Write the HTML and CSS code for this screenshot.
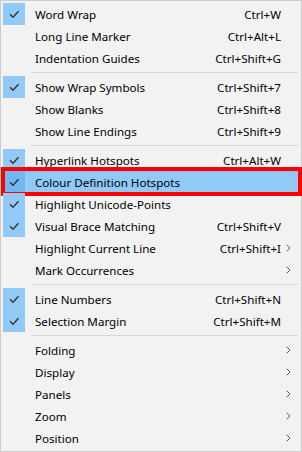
FILE: index.html
```html
<!DOCTYPE html>
<html>
<head>
<meta charset="utf-8">
<link rel="stylesheet" href="styles.css">
</head>
<body>
<div class="menu">
  <div class="item checked"><span class="check"><svg viewBox="0 0 22 22" width="22" height="22"><path d="M7 11.2 L10 14.2 L15.5 8.3" fill="none" stroke="#333" stroke-width="1.4"/></svg></span><span class="label">Word Wrap</span><span class="key">Ctrl+W</span><span class="arrow"></span></div>
  <div class="item"><span class="check"></span><span class="label">Long Line Marker</span><span class="key">Ctrl+Alt+L</span><span class="arrow"></span></div>
  <div class="item"><span class="check"></span><span class="label">Indentation Guides</span><span class="key">Ctrl+Shift+G</span><span class="arrow"></span></div>
  <div class="sep"></div>
  <div class="item checked"><span class="check"><svg viewBox="0 0 22 22" width="22" height="22"><path d="M7 11.2 L10 14.2 L15.5 8.3" fill="none" stroke="#333" stroke-width="1.4"/></svg></span><span class="label">Show Wrap Symbols</span><span class="key">Ctrl+Shift+7</span><span class="arrow"></span></div>
  <div class="item"><span class="check"></span><span class="label">Show Blanks</span><span class="key">Ctrl+Shift+8</span><span class="arrow"></span></div>
  <div class="item"><span class="check"></span><span class="label">Show Line Endings</span><span class="key">Ctrl+Shift+9</span><span class="arrow"></span></div>
  <div class="sep"></div>
  <div class="item checked"><span class="check"><svg viewBox="0 0 22 22" width="22" height="22"><path d="M7 11.2 L10 14.2 L15.5 8.3" fill="none" stroke="#333" stroke-width="1.4"/></svg></span><span class="label">Hyperlink Hotspots</span><span class="key">Ctrl+Alt+W</span><span class="arrow"></span></div>
  <div class="item checked active"><span class="check"><svg viewBox="0 0 22 22" width="22" height="22"><path d="M7 11.2 L10 14.2 L15.5 8.3" fill="none" stroke="#333" stroke-width="1.4"/></svg></span><span class="label">Colour Definition Hotspots</span><span class="key"></span><span class="arrow"></span><span class="redbox"></span></div>
  <div class="item checked"><span class="check"><svg viewBox="0 0 22 22" width="22" height="22"><path d="M7 11.2 L10 14.2 L15.5 8.3" fill="none" stroke="#333" stroke-width="1.4"/></svg></span><span class="label">Highlight Unicode-Points</span><span class="key"></span><span class="arrow"></span></div>
  <div class="item checked"><span class="check"><svg viewBox="0 0 22 22" width="22" height="22"><path d="M7 11.2 L10 14.2 L15.5 8.3" fill="none" stroke="#333" stroke-width="1.4"/></svg></span><span class="label">Visual Brace Matching</span><span class="key">Ctrl+Shift+V</span><span class="arrow"></span></div>
  <div class="item"><span class="check"></span><span class="label">Highlight Current Line</span><span class="key">Ctrl+Shift+I</span><span class="arrow"><svg viewBox="0 0 5 8" width="5" height="8"><path d="M0.8 0.8 L4 4 L0.8 7.2" fill="none" stroke="#555" stroke-width="1"/></svg></span></div>
  <div class="item"><span class="check"></span><span class="label">Mark Occurrences</span><span class="key"></span><span class="arrow"><svg viewBox="0 0 5 8" width="5" height="8"><path d="M0.8 0.8 L4 4 L0.8 7.2" fill="none" stroke="#555" stroke-width="1"/></svg></span></div>
  <div class="sep"></div>
  <div class="item checked"><span class="check"><svg viewBox="0 0 22 22" width="22" height="22"><path d="M7 11.2 L10 14.2 L15.5 8.3" fill="none" stroke="#333" stroke-width="1.4"/></svg></span><span class="label">Line Numbers</span><span class="key">Ctrl+Shift+N</span><span class="arrow"></span></div>
  <div class="item checked"><span class="check"><svg viewBox="0 0 22 22" width="22" height="22"><path d="M7 11.2 L10 14.2 L15.5 8.3" fill="none" stroke="#333" stroke-width="1.4"/></svg></span><span class="label">Selection Margin</span><span class="key">Ctrl+Shift+M</span><span class="arrow"></span></div>
  <div class="sep"></div>
  <div class="item"><span class="check"></span><span class="label">Folding</span><span class="key"></span><span class="arrow"><svg viewBox="0 0 5 8" width="5" height="8"><path d="M0.8 0.8 L4 4 L0.8 7.2" fill="none" stroke="#555" stroke-width="1"/></svg></span></div>
  <div class="item"><span class="check"></span><span class="label">Display</span><span class="key"></span><span class="arrow"><svg viewBox="0 0 5 8" width="5" height="8"><path d="M0.8 0.8 L4 4 L0.8 7.2" fill="none" stroke="#555" stroke-width="1"/></svg></span></div>
  <div class="item"><span class="check"></span><span class="label">Panels</span><span class="key"></span><span class="arrow"><svg viewBox="0 0 5 8" width="5" height="8"><path d="M0.8 0.8 L4 4 L0.8 7.2" fill="none" stroke="#555" stroke-width="1"/></svg></span></div>
  <div class="item"><span class="check"></span><span class="label">Zoom</span><span class="key"></span><span class="arrow"><svg viewBox="0 0 5 8" width="5" height="8"><path d="M0.8 0.8 L4 4 L0.8 7.2" fill="none" stroke="#555" stroke-width="1"/></svg></span></div>
  <div class="item"><span class="check"></span><span class="label">Position</span><span class="key"></span><span class="arrow"><svg viewBox="0 0 5 8" width="5" height="8"><path d="M0.8 0.8 L4 4 L0.8 7.2" fill="none" stroke="#555" stroke-width="1"/></svg></span></div>
</div>
</body>
</html>
```

FILE: styles.css
```css
* { box-sizing: border-box; }
html, body { margin: 0; padding: 0; background: #f2f2f2; }
.menu {
  width: 302px;
  height: 452px;
  border: 1px solid #cccccc;
  background: #f2f2f2;
  padding: 2px;
  font-family: "Noto Sans", "Open Sans", sans-serif;
  font-size: 11.6px;
  color: #000;
}
.item {
  position: relative;
  display: flex;
  align-items: center;
  height: 22px;
}
.check {
  width: 22px;
  height: 22px;
  flex: none;
  display: flex;
}
.checked .check { background: #91c9f7; }
.label {
  flex: 1;
  margin-left: 10px;
  white-space: nowrap;
}
.key {
  white-space: nowrap;
  text-align: right;
}
.arrow {
  width: 18px;
  flex: none;
  display: flex;
  justify-content: flex-start;
  padding-left: 5px;
}
.arrow svg { display: block; }
.sep {
  height: 7px;
  display: flex;
  align-items: center;
  padding-left: 28px;
  padding-right: 1px;
}
.sep::before {
  content: "";
  display: block;
  flex: 1;
  height: 1px;
  background: #d7d7d7;
}
.active {
  background: #91c9f7;
  box-shadow: inset 0 0 0 1px #7fbaf0;
}
.active .check { background: #72b6f2; }
.redbox {
  position: absolute;
  left: -2px;
  right: -3px;
  top: -4px;
  bottom: -3px;
  border: 4px solid #ff0000;
}
```
